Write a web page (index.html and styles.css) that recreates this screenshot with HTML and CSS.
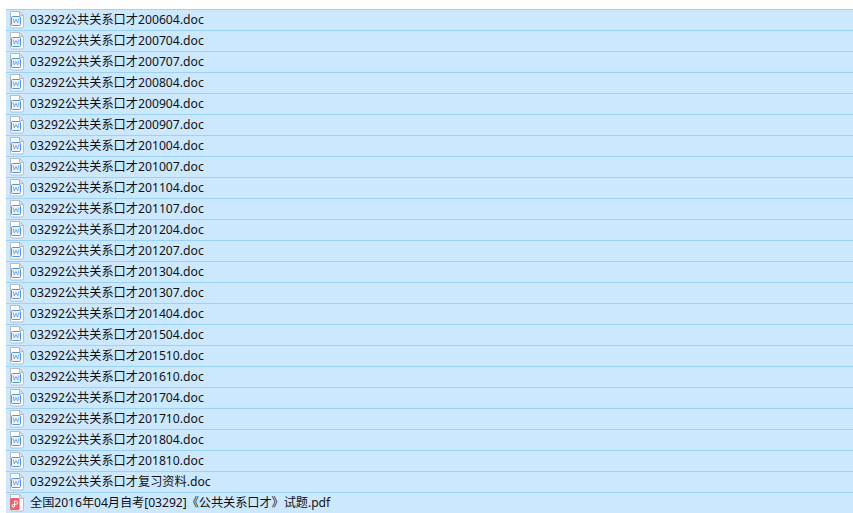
FILE: index.html
```html
<!DOCTYPE html>
<html lang="zh-CN">
<head>
<meta charset="utf-8">
<title>文件列表</title>
<link rel="stylesheet" href="styles.css">
</head>
<body>
<svg class="defs" width="0" height="0" aria-hidden="true">
  <symbol id="page" viewBox="0 0 16 18">
    <path d="M1.5 .5H10.5L14.5 4.5V15.5a1.5 1.5 0 0 1-1.5 1.5H3A1.5 1.5 0 0 1 1.5 15.500Z" fill="#fff" stroke="#b4bcc6"/>
    <path d="M10.5 .5V4.5H14.5Z" fill="#e4e8ec" stroke="#b4bcc6"/>
  </symbol>
  <symbol id="word" viewBox="0 0 16 18">
    <use href="#page"/>
    <rect x="2.5" y="5.5" width="9" height="9" rx="1" fill="#edf4fe" stroke="#4f94ee"/>
    <path d="M4.200 7.600 5.300 12 7 8.400 8.700 12 9.800 7.600" fill="none" stroke="#5b9cf0" stroke-width=".8"/>
  </symbol>
  <symbol id="pdf" viewBox="0 0 16 18">
    <use href="#page"/>
    <rect x="1" y="4" width="9.500" height="12" rx="1.500" fill="#f0606c"/>
    <circle cx="4.300" cy="11.800" r="1.300" fill="none" stroke="#fff"/>
    <path d="M5.600 11.800V7H7A1.600 1.600 0 0 1 7 10.200H5.600" fill="none" stroke="#fff"/>
  </symbol>
</svg>
<ul class="list">
  <li class="row"><svg class="icon"><use href="#word"/></svg><span class="name">03292公共关系口才200604.doc</span></li>
  <li class="row"><svg class="icon"><use href="#word"/></svg><span class="name">03292公共关系口才200704.doc</span></li>
  <li class="row"><svg class="icon"><use href="#word"/></svg><span class="name">03292公共关系口才200707.doc</span></li>
  <li class="row"><svg class="icon"><use href="#word"/></svg><span class="name">03292公共关系口才200804.doc</span></li>
  <li class="row"><svg class="icon"><use href="#word"/></svg><span class="name">03292公共关系口才200904.doc</span></li>
  <li class="row"><svg class="icon"><use href="#word"/></svg><span class="name">03292公共关系口才200907.doc</span></li>
  <li class="row"><svg class="icon"><use href="#word"/></svg><span class="name">03292公共关系口才201004.doc</span></li>
  <li class="row"><svg class="icon"><use href="#word"/></svg><span class="name">03292公共关系口才201007.doc</span></li>
  <li class="row"><svg class="icon"><use href="#word"/></svg><span class="name">03292公共关系口才201104.doc</span></li>
  <li class="row"><svg class="icon"><use href="#word"/></svg><span class="name">03292公共关系口才201107.doc</span></li>
  <li class="row"><svg class="icon"><use href="#word"/></svg><span class="name">03292公共关系口才201204.doc</span></li>
  <li class="row"><svg class="icon"><use href="#word"/></svg><span class="name">03292公共关系口才201207.doc</span></li>
  <li class="row"><svg class="icon"><use href="#word"/></svg><span class="name">03292公共关系口才201304.doc</span></li>
  <li class="row"><svg class="icon"><use href="#word"/></svg><span class="name">03292公共关系口才201307.doc</span></li>
  <li class="row"><svg class="icon"><use href="#word"/></svg><span class="name">03292公共关系口才201404.doc</span></li>
  <li class="row"><svg class="icon"><use href="#word"/></svg><span class="name">03292公共关系口才201504.doc</span></li>
  <li class="row"><svg class="icon"><use href="#word"/></svg><span class="name">03292公共关系口才201510.doc</span></li>
  <li class="row"><svg class="icon"><use href="#word"/></svg><span class="name">03292公共关系口才201610.doc</span></li>
  <li class="row"><svg class="icon"><use href="#word"/></svg><span class="name">03292公共关系口才201704.doc</span></li>
  <li class="row"><svg class="icon"><use href="#word"/></svg><span class="name">03292公共关系口才201710.doc</span></li>
  <li class="row"><svg class="icon"><use href="#word"/></svg><span class="name">03292公共关系口才201804.doc</span></li>
  <li class="row"><svg class="icon"><use href="#word"/></svg><span class="name">03292公共关系口才201810.doc</span></li>
  <li class="row"><svg class="icon"><use href="#word"/></svg><span class="name">03292公共关系口才复习资料.doc</span></li>
  <li class="row"><svg class="icon"><use href="#pdf"/></svg><span class="name tight">全国2016年04月自考[03292]《公共关系口才》试题.pdf</span></li>
</ul>
</body>
</html>
```

FILE: styles.css
```css
html, body {
  margin: 0;
  height: 513px;
  overflow: hidden;
  background: #fff;
}
.defs {
  position: absolute;
}
.list {
  list-style: none;
  margin: 0;
  padding: 9px 0 0 6px;
  font-family: "Noto Sans", "Noto Sans CJK SC", sans-serif;
  font-size: 12.2px;
  color: #111;
}
.row {
  box-sizing: border-box;
  height: 21px;
  display: flex;
  align-items: center;
  gap: 5px;
  padding-left: 3px;
  background: #cce8ff;
  border-top: 1px solid #99d1ff;
  white-space: nowrap;
}
.icon {
  width: 16px;
  height: 18px;
  flex: none;
}
.name {
  margin-bottom: 2px;
}
.tight {
  letter-spacing: -0.06px;
}
```
